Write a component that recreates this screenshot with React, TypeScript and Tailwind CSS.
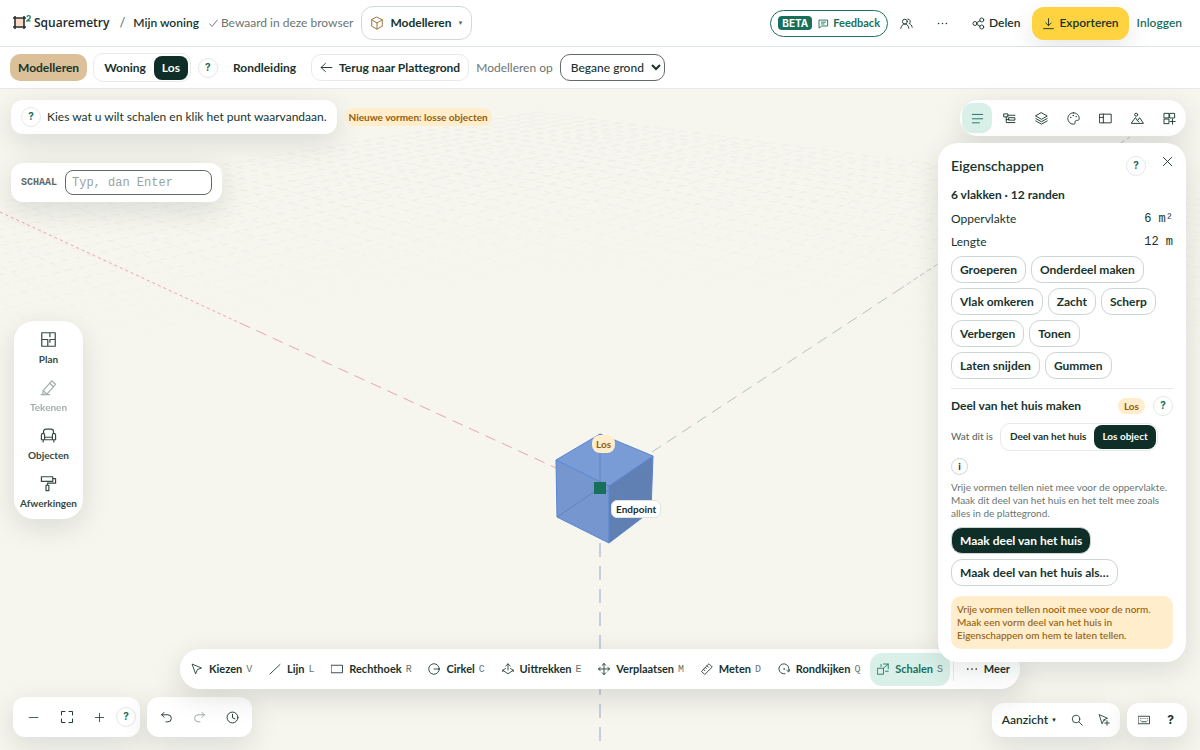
import React, { useState } from "react";
import { clsx } from "clsx";

interface IconProps {
  size?: number;
  className?: string;
  width?: number;
  children?: React.ReactNode;
}

function Icon({ size = 16, className, width = 1.7, children }: IconProps) {
  return (
    <svg
      width={size}
      height={size}
      viewBox="0 0 24 24"
      fill="none"
      stroke="currentColor"
      strokeWidth={width}
      strokeLinecap="round"
      strokeLinejoin="round"
      className={clsx("shrink-0", className)}
      aria-hidden="true"
    >
      {children}
    </svg>
  );
}

const icons = {
  cube: (
    <>
      <path d="M12 2 21 6.500v11L12 22.500 3 17.500V6.500z" />
      <path d="M3 6.500 12 12l9-5.500M12 12v10.500" />
    </>
  ),
  chat: (
    <>
      <path d="M3 4.500h18v13H8L3 21.500z" />
      <path d="M7.500 9h9M7.500 13h6" />
    </>
  ),
  users: (
    <>
      <circle cx="9" cy="8.500" r="4.500" />
      <path d="M1.500 21c.8-5 3.500-8 7.500-8s6.700 3 7.500 8" />
      <path d="M14.500 3.800a4.500 4.500 0 0 1 2.500 8.200c3 1 5 3.500 5.500 7" />
    </>
  ),
  dots: (
    <g fill="currentColor" stroke="none">
      <circle cx="3.500" cy="12" r="1.700" />
      <circle cx="12" cy="12" r="1.700" />
      <circle cx="20.500" cy="12" r="1.700" />
    </g>
  ),
  share: (
    <>
      <circle cx="5.500" cy="12" r="3.700" />
      <circle cx="18" cy="5.500" r="3.700" />
      <circle cx="18" cy="18.500" r="3.700" />
      <path d="m8.800 10.400 5.900-3.300M8.800 13.600l5.900 3.300" />
    </>
  ),
  download: <path d="M12 3v13M7 11l5 5 5-5M3 21.500h18" />,
  arrowLeft: <path d="M22 12H2M10 4.500 2 12l8 7.500" />,
  check: <path d="m2 13 6 7L22 3" />,
  lines: <path d="M2.500 4.500h19M2.500 12.500h19M2.500 20h13" />,
  tree: (
    <path d="M2 3.500h7v5.500H2zM6 9v10.500h5M6 14h5M9 6h13M11 10.500h11v4.500H11zM11 19.500h11" />
  ),
  layers: (
    <>
      <path d="M12 1.500 22.500 7.500 12 13.500 1.500 7.500z" />
      <path d="m1.500 12 10.500 6 10.500-6" />
      <path d="m1.500 16.500 10.500 6 10.500-6" />
    </>
  ),
  palette: (
    <>
      <path d="M12 1.500C6 1.500 1.500 6.200 1.500 12S6 22.500 12 22.500c2.200 0 3.300-1.300 2.900-3.300-.4-2.200.8-3.700 3-3.700h1.600c2 0 3-1.300 3-3.500 0-6-4.500-10.500-10.500-10.500z" />
      <g fill="currentColor" stroke="none">
        <circle cx="7" cy="10" r="1.300" />
        <circle cx="11.500" cy="6.500" r="1.300" />
        <circle cx="17" cy="8.500" r="1.300" />
      </g>
    </>
  ),
  sidebar: <path d="M1.500 4h21v16h-21zM8 4v16M1.500 10H8" />,
  scenery: (
    <>
      <path d="M1 21h22l-7-10.500-4 5.500-3.500-5z" />
      <path d="m12 16 2.500 2.500" />
      <circle cx="9.500" cy="5" r="2.800" />
    </>
  ),
  gridAdd: (
    <path d="M2.500 2.500h8.500V11H2.500zM13 2.500h8.500V11H13zM2.500 13H11v8.500H2.500zM13 17.500h9.500M17.500 13v9.500" />
  ),
  close: <path d="m3 3 18 18M21 3 3 21" />,
  plan: <path d="M2.500 2.500h19v19h-19zM2.500 12H11v9.500M14 2.500V8M14 12h7.500M14 12v4" />,
  pencil: (
    <>
      <path d="M1.500 22h12M4.500 16.500 16.500 2.500l5.500 5-12 13.500-6 1z" />
      <path d="m13.500 6 5.500 5M4.500 16.500l5.500 4.500" />
    </>
  ),
  sofa: (
    <>
      <path d="M5 9V6C5 4 6.500 3 8.500 3h7c2 0 3.500 1 3.500 3v3" />
      <path d="M6.500 14.500V11.500C6.500 10 5.600 9 4.200 9S2 10 2 11.500V18h20v-6.500C22 10 21 9 19.700 9s-2.200 1-2.200 2.500v3zM6.500 14.500V18M17.500 14.500V18M4.500 18v3M19.500 18v3" />
    </>
  ),
  roller: (
    <path d="M2 2.500h16v6.500H2zM18 5h4v6.500H10.500v3M8.500 14.500h4V22h-4z" />
  ),
  cursor: <path d="m3 2.500 18 7.500-8 3-3.500 8z" />,
  line: <path d="M2 22 22 3" />,
  rect: <path d="M1 4.500h22v15H1z" />,
  circle: (
    <>
      <circle cx="12" cy="12" r="10.500" />
      <path d="M12 12h10.500" />
    </>
  ),
  extrude: (
    <>
      <path d="M12 14V2M7.500 6 12 1.500 16.500 6" />
      <path d="M7 11 1.500 14.500 12 21.500l10.500-7L17 11" />
      <path d="M1.500 14.500v2.500M22.500 14.500v2.500" />
    </>
  ),
  move: (
    <path d="M12 1v22M1 12h22M8.500 4.500 12 1l3.500 3.500M8.500 19.500 12 23l3.500-3.500M4.500 8.500 1 12l3.500 3.500M19.500 8.500 23 12l-3.500 3.500" />
  ),
  ruler: (
    <path d="M1.500 16 16 1.500l6.500 6.500L8 22.500zM12 5.500l3 3M8.500 9l2 2M5 12.500l3 3" />
  ),
  orbit: (
    <>
      <path d="M14 21.500A10 10 0 1 1 21.500 14.500" />
      <path d="m17.500 14.500 4 3.500 2-5" />
      <circle cx="12" cy="12" r=".5" />
    </>
  ),
  scale: (
    <path d="M1.500 10.500H13v12H1.500zM8 7V3M13 2h9.500v9.500M22.500 2 13 10.500M22.500 16.500H17" />
  ),
  minus: <path d="M2.500 12h19" />,
  plus: <path d="M3 12h18M12 3v18" />,
  fit: <path d="M2.500 8.500v-6h6M15.500 2.500h6v6M21.500 15.500v6h-6M8.500 21.500h-6v-6" />,
  undo: <path d="M7.500 2.500 3 7l4.500 4.500M3 7h11.500a6.500 6.500 0 0 1 0 13H11" />,
  redo: <path d="M16.500 2.500 21 7l-4.500 4.500M21 7H9.500a6.500 6.500 0 0 0 0 13H13" />,
  clock: (
    <>
      <circle cx="12" cy="12" r="10" />
      <path d="M12 6v6.500l4.500 2" />
    </>
  ),
  search: (
    <>
      <circle cx="10" cy="10" r="7.500" />
      <path d="m15.500 15.500 7 7" />
    </>
  ),
  cursorAdd: (
    <path d="m3 1.500 16 7-7 3-3.500 7.500zM18 13.500v9M13.500 18h9M12 11.500l2 2" />
  ),
  keyboard: (
    <path d="M1 4.500h22v15H1zM5.500 9h.1M10 9h.1M14 9h.1M18.500 9h.1M5.500 12.500h.1M18.500 12.500h.1M7.500 15.500h9" />
  ),
};

type IconName = keyof typeof icons;

const panelTabs: { icon: IconName; label: string }[] = [
  { icon: "lines", label: "Eigenschappen" },
  { icon: "tree", label: "Structuur" },
  { icon: "layers", label: "Lagen" },
  { icon: "palette", label: "Materialen" },
  { icon: "sidebar", label: "Bladen" },
  { icon: "scenery", label: "Omgeving" },
  { icon: "gridAdd", label: "Onderdelen" },
];

const sideItems: { icon: IconName; label: string; disabled?: boolean }[] = [
  { icon: "plan", label: "Plan" },
  { icon: "pencil", label: "Tekenen", disabled: true },
  { icon: "sofa", label: "Objecten" },
  { icon: "roller", label: "Afwerkingen" },
];

const tools: { icon: IconName; label: string; shortcut: string }[] = [
  { icon: "cursor", label: "Kiezen", shortcut: "V" },
  { icon: "line", label: "Lijn", shortcut: "L" },
  { icon: "rect", label: "Rechthoek", shortcut: "R" },
  { icon: "circle", label: "Cirkel", shortcut: "C" },
  { icon: "extrude", label: "Uittrekken", shortcut: "E" },
  { icon: "move", label: "Verplaatsen", shortcut: "M" },
  { icon: "ruler", label: "Meten", shortcut: "D" },
  { icon: "orbit", label: "Rondkijken", shortcut: "Q" },
  { icon: "scale", label: "Schalen", shortcut: "S" },
];

const actionRows = [
  ["Groeperen", "Onderdeel maken"],
  ["Vlak omkeren", "Zacht", "Scherp"],
  ["Verbergen", "Tonen"],
  ["Laten snijden", "Gummen"],
];

const G = -0.043;
const H = -0.0516;
const EXTENT = 28;

// Ground plane to screen; the origin is the back corner of the cube
function project(a: number, b: number) {
  const w = 1 + G * a + H * b;
  const x = (600 - 536 * G * a + 1390 * H * b) / w;
  const y = (488 - 30 * (G * a + H * b)) / w;
  return `${x.toFixed(1)} ${y.toFixed(1)}`;
}

function gridLines() {
  const lines: string[] = [];
  for (let i = -EXTENT; i <= EXTENT; i += 1) {
    // stop before the line passes behind the camera
    const endB = Math.min(EXTENT, (0.8 + G * i) / -H);
    const endA = Math.min(EXTENT, (0.8 + H * i) / -G);
    if (endB > -EXTENT) lines.push(`M${project(i, -EXTENT)}L${project(i, endB)}`);
    if (endA > -EXTENT) lines.push(`M${project(-EXTENT, i)}L${project(endA, i)}`);
  }
  return lines.join("");
}

function Scene() {
  return (
    <svg
      className="absolute inset-0 h-full w-full"
      viewBox="0 89 1200 661"
      preserveAspectRatio="xMidYMid slice"
      fill="none"
      aria-hidden="true"
    >
      <defs>
        <radialGradient id="fade" gradientUnits="userSpaceOnUse" cx="0" cy="0" r="1" gradientTransform="translate(560 420) scale(800 310)">
          <stop offset="0.4" stopColor="#fff" stopOpacity="0" />
          <stop offset="0.75" stopColor="#fff" stopOpacity="0.6" />
          <stop offset="1" stopColor="#fff" stopOpacity="0.5" />
        </radialGradient>
        <linearGradient id="top" gradientUnits="userSpaceOnUse" x1="0" y1="260" x2="0" y2="380">
          <stop offset="0" stopColor="#f6f5ee" stopOpacity="0" />
          <stop offset="1" stopColor="#f6f5ee" />
        </linearGradient>
        <mask id="gridMask" maskUnits="userSpaceOnUse" x="0" y="89" width="1200" height="661">
          <rect x="0" y="89" width="1200" height="661" fill="url(#fade)" />
        </mask>
      </defs>
      <g mask="url(#gridMask)">
        <path d={gridLines()} stroke="#d0d3cd" strokeWidth="0.6" strokeOpacity="0.55" strokeDasharray="7 6" />
      </g>
      <rect x="0" y="260" width="1200" height="490" fill="url(#top)" />
      <path d="M0 212 240 323" stroke="#eba6a6" strokeDasharray="3 3" />
      <path d="M240 323 556 468" stroke="#eba6a6" strokeDasharray="11 7" />
      <path d="M652 452 900 289" stroke="#b3c6b8" strokeDasharray="11 7" />
      <path d="M900 289 1130 137" stroke="#bcc6bd" strokeDasharray="5 3" />
      <path d="M600 543v210" stroke="#b9c0dc" strokeWidth="1.500" strokeDasharray="14 9" />

      <path d="M600 434 653 456 609 486 556 460z" fill="#7a9cd6" />
      <path d="M556 460 609 486V543L557 517z" fill="#7596cf" />
      <path d="M653 456 609 486V543L651 511z" fill="#6080b3" />
      <path d="M600 434v54M557 517l43-29 51 23" stroke="#6384c0" />
      <path d="M600 434 653 456 651 511 609 543 557 517 556 460zM556 460 609 486 653 456M609 486v57" stroke="#5784d3" />
      <path d="M594 482h12v12h-12z" fill="#18705b" />
    </svg>
  );
}

function HelpButton({ className }: { className?: string }) {
  return (
    <button
      aria-label="Hulp"
      className={clsx(
        "flex size-5 shrink-0 items-center justify-center rounded-full border border-[#e3e9e6] bg-white font-['Inter',sans-serif] text-[10px] font-bold text-[#1b705b]",
        className,
      )}
    >
      ?
    </button>
  );
}

function IconButton({ icon, label, className, size = 16 }: { icon: IconName; label: string; className?: string; size?: number }) {
  return (
    <button aria-label={label} className={clsx("flex items-center justify-center", className)}>
      <Icon size={size}>{icons[icon]}</Icon>
    </button>
  );
}

function Header() {
  return (
    <header className="flex h-[47px] shrink-0 items-center border-b border-[#dfe7e4] bg-white pl-3 pr-[18px]">
      <a href="#" className="flex items-center gap-0.5 text-[#232b2b]">
        <svg width="20" height="18" viewBox="0 0 20 18" fill="none" aria-hidden="true">
          <path d="M3 4h9v9H3z" fill="#fbd9c5" />
          <path d="M3 2v13M12 2v13M1 4h13M1 13h13" stroke="#28302f" strokeWidth="1.600" />
          <path d="M15 3c.2-2 3.600-1.800 3.300.3-.2 1.200-1.800 2-3.300 3.500h3.500" stroke="#1b8068" strokeWidth="1.300" />
        </svg>
        <span className="font-['Open_Sans',sans-serif] text-xs font-semibold">Squaremetry</span>
      </a>
      <span className="ml-2.5 text-[13px] text-[#56635f]">/</span>
      <a href="#" className="ml-2 text-xs font-semibold">Mijn woning</a>
      <span className="ml-2.5 flex items-center gap-[3px] text-xs text-[#6a7572]">
        <Icon size={9} width={2.5}>{icons.check}</Icon>
        Bewaard in deze browser
      </span>
      <button className="ml-2 flex h-[34px] items-center gap-1.5 rounded-xl border border-[#cfdbd7] px-2 text-xs font-bold">
        <span className="text-[#9a7440]">
          <Icon size={14}>{icons.cube}</Icon>
        </span>
        Modelleren
        <span className="text-[6px] text-[#56635f]">▼</span>
      </button>

      <div className="ml-auto flex items-center">
        <button className="flex h-[27px] items-center gap-1 rounded-full border border-[#1b705b] px-[7px] text-[11px] font-bold text-[#1b705b]">
          <span className="mr-0.5 rounded bg-[#18705b] px-1 font-['Inter',sans-serif] text-[10px] leading-[14px] text-white">BETA</span>
          <Icon size={11} width={2}>{icons.chat}</Icon>
          Feedback
        </button>
        <IconButton icon="users" label="Samenwerken" size={13} className="ml-1 size-7" />
        <IconButton icon="dots" label="Meer opties" size={11} className="ml-2 size-7" />
        <button className="ml-4 flex items-center gap-1 text-xs font-semibold">
          <Icon size={13}>{icons.share}</Icon>
          Delen
        </button>
        <button className="ml-3 flex h-[33px] items-center gap-1 rounded-xl bg-[#ffd23f] px-2.5 text-xs font-semibold shadow-[0_10px_24px_rgba(20,40,30,0.1)]">
          <Icon size={13}>{icons.download}</Icon>
          Exporteren
        </button>
        <a href="#" className="ml-2 text-xs font-semibold text-[#1b705b]">Inloggen</a>
      </div>
    </header>
  );
}

function ModeBar() {
  const [mode, setMode] = useState("Los");

  return (
    <nav className="flex h-[42px] shrink-0 items-center border-b border-[#e7eae6] bg-white px-2.5 text-xs font-bold">
      <button className="h-[27px] rounded-[10px] bg-[#dbc09a] px-2">Modelleren</button>
      <div className="ml-1.5 flex h-[29px] items-center rounded-[10px] border border-[#e5ebe8] p-0.5">
        {["Woning", "Los"].map((item) => (
          <button
            key={item}
            onClick={() => setMode(item)}
            className={clsx(
              "h-6 rounded-lg px-2",
              mode === item && "bg-[#0e2e27] text-white",
            )}
          >
            {item}
          </button>
        ))}
      </div>
      <HelpButton className="ml-[7px]" />
      <button className="ml-[15px]">Rondleiding</button>
      <button className="ml-[15px] flex h-[27px] items-center gap-1.5 rounded-[10px] border border-[#e5ebe8] px-2">
        <Icon size={13}>{icons.arrowLeft}</Icon>
        Terug naar Plattegrond
      </button>
      <label htmlFor="floor" className="ml-[7px] font-normal text-[#6a7572]">Modelleren op</label>
      <select id="floor" className="ml-[7px] h-[27px] w-[105px] rounded-[10px] border border-[#626b68] bg-white pl-1.5 font-medium">
        <option>Begane grond</option>
      </select>
    </nav>
  );
}

function PropertiesPanel() {
  const [kind, setKind] = useState("Los object");

  return (
    <section className="absolute right-[14px] top-[54px] z-20 w-[248px] rounded-[20px] bg-white px-[13px] pb-[13px] text-xs shadow-[0_8px_28px_rgba(20,40,30,0.12)]">
      <div className="flex h-11 items-center pt-0.5">
        <h2 className="mr-auto text-sm font-semibold">Eigenschappen</h2>
        <HelpButton className="mr-[15px]" />
        <button aria-label="Sluiten" className="mb-2.5 flex size-3 items-center justify-center">
          <Icon size={11} width={2}>{icons.close}</Icon>
        </button>
      </div>
      <p className="mb-1 text-xs leading-4 font-bold">6 vlakken · 12 randen</p>
      <dl className="flex h-[23px] items-center justify-between">
        <dt>Oppervlakte</dt>
        <dd className="font-['Liberation_Mono',monospace]">6 m²</dd>
      </dl>
      <dl className="flex h-[23px] items-center justify-between">
        <dt>Lengte</dt>
        <dd className="font-['Liberation_Mono',monospace]">12 m</dd>
      </dl>
      <div className="mt-[3px] flex flex-col gap-[5px]">
        {actionRows.map((row) => (
          <div key={row[0]} className="flex gap-[5px]">
            {row.map((label) => (
              <button key={label} className="h-[27px] rounded-[11px] border border-[#ccd6d2] px-2 font-bold">
                {label}
              </button>
            ))}
          </div>
        ))}
      </div>

      <div className="mt-[9px] flex items-center border-t border-[#e3e8e5] pt-[7px]">
        <h3 className="mr-auto font-bold">Deel van het huis maken</h3>
        <span className="mr-2 rounded-full bg-[#ffedcc] px-1.5 text-[10px] leading-4 font-bold text-[#935e0b]">Los</span>
        <HelpButton />
      </div>
      <div className="mt-[7px] flex items-center text-[10px]">
        <span className="mr-[7px] font-medium text-[#5c6966]">Wat dit is</span>
        <div className="flex h-7 items-center rounded-[10px] border border-[#e5ebe8] p-px font-bold">
          {["Deel van het huis", "Los object"].map((item) => (
            <button
              key={item}
              onClick={() => setKind(item)}
              className={clsx("h-6 rounded-lg px-2", kind === item && "bg-[#0e2e27] text-white")}
            >
              {item}
            </button>
          ))}
        </div>
      </div>
      <button aria-label="Meer informatie" className="mt-[7px] flex size-[17px] items-center justify-center rounded-full border border-[#ccd6d2] text-[10px] font-bold">
        i
      </button>
      <p className="mt-[6px] text-[10px] leading-[13px] text-[#6a7572]">
        Vrije vormen tellen niet mee voor de oppervlakte. Maak dit deel van het huis en het telt mee zoals alles in de plattegrond.
      </p>
      <div className="mt-[7px] flex flex-col items-start gap-[5px] font-bold">
        <button className="h-[27px] rounded-[11px] border border-[#ccd6d2] bg-[#0e2e27] px-2 text-white">Maak deel van het huis</button>
        <button className="h-[27px] rounded-[11px] border border-[#ccd6d2] px-2">Maak deel van het huis als…</button>
      </div>
      <p className="mt-2.5 rounded-[10px] bg-[#ffedcc] px-1.5 py-[7px] text-[10px] leading-[13px] font-medium text-[#935e0b]">
        Vrije vormen tellen nooit mee voor de norm. Maak een vorm deel van het huis in Eigenschappen om hem te laten tellen.
      </p>
    </section>
  );
}

function ToolBar() {
  const [active, setActive] = useState("Schalen");

  return (
    <div className="absolute bottom-[61px] left-1/2 z-10 flex h-10 w-[840px] -translate-x-1/2 items-center justify-between rounded-[20px] bg-white pl-1 pr-2.5 text-[11px] font-bold shadow-[0_8px_28px_rgba(20,40,30,0.14)]">
      {tools.map((tool) => (
        <button
          key={tool.label}
          onClick={() => setActive(tool.label)}
          className={clsx(
            "flex h-[33px] items-center rounded-xl px-[7px]",
            active === tool.label && "bg-[#d9f0e9] text-[#1b705b]",
          )}
        >
          <Icon size={12}>{icons[tool.icon]}</Icon>
          <span className="ml-1.5">{tool.label}</span>
          <kbd className="ml-1 pt-0.5 font-['Liberation_Mono',monospace] text-[10px] font-normal text-[#6a7572]">{tool.shortcut}</kbd>
        </button>
      ))}
      <button className="flex h-6 items-center gap-1.5 border-l border-[#e3e8e5] pl-3">
        <Icon size={12}>{icons.dots}</Icon>
        Meer
      </button>
    </div>
  );
}

export default function App() {
  const [tab, setTab] = useState("Eigenschappen");

  return (
    <div className="flex h-screen flex-col overflow-hidden bg-[#f6f5ee] font-['Lato',sans-serif] text-xs text-[#17342d]">
      <Header />
      <ModeBar />
      <main className="relative min-h-0 flex-1">
        <Scene />

        <div className="absolute left-1/2 top-[346px] ml-[-8px] rounded-lg bg-[#ffedcc] px-1 text-[10px] leading-[18px] font-bold text-[#935e0b]">Los</div>
        <div className="absolute left-1/2 top-[411px] ml-[11px] rounded-md border border-[#dfe3e0] bg-white px-1 text-[10px] leading-4 font-bold text-[#232b2b]">Endpoint</div>

        <div className="absolute left-[11px] top-[11px] flex items-center gap-2">
          <div className="flex h-[34px] items-center gap-1.5 rounded-xl bg-white px-2.5 shadow-[0_8px_28px_rgba(20,40,30,0.12)]">
            <HelpButton />
            <p>Kies wat u wilt schalen en klik het punt waarvandaan.</p>
          </div>
          <span className="rounded-full bg-[#ffedcc] px-1 text-[10px] leading-[18px] font-bold text-[#935e0b]">Nieuwe vormen: losse objecten</span>
        </div>

        <div className="absolute left-[11px] top-[74px] flex h-[39px] items-center gap-2 rounded-xl bg-white px-2.5 shadow-[0_8px_28px_rgba(20,40,30,0.12)]">
          <label htmlFor="scale" className="font-['Liberation_Mono',monospace] text-[10px] font-bold text-[#5c6966]">SCHAAL</label>
          <input
            id="scale"
            placeholder="Typ, dan Enter"
            className="h-[25px] w-[147px] rounded-lg border border-[#626b68] px-1.5 font-['Liberation_Mono',monospace] text-xs placeholder:text-[#9aa3a0]"
          />
        </div>

        <div className="absolute left-[14px] top-[232px] flex w-[69px] flex-col rounded-[20px] bg-white pb-1.5 shadow-[0_8px_28px_rgba(20,40,30,0.12)]">
          {sideItems.map((item) => (
            <button
              key={item.label}
              disabled={item.disabled}
              className={clsx("flex h-12 flex-col items-center justify-end gap-[3px] pb-0.5 text-[10px] leading-4 font-bold text-[#344b45]", item.disabled && "opacity-45")}
            >
              <Icon size={17} width={1.7}>{icons[item.icon]}</Icon>
              {item.label}
            </button>
          ))}
        </div>

        <div className="absolute right-[14px] top-[11px] z-20 flex h-9 items-center gap-0.5 rounded-full bg-white px-0.5 shadow-[0_8px_28px_rgba(20,40,30,0.12)]">
          {panelTabs.map((item) => (
            <button
              key={item.label}
              aria-label={item.label}
              onClick={() => setTab(item.label)}
              className={clsx(
                "flex size-[30px] items-center justify-center rounded-[10px]",
                tab === item.label && "bg-[#d9f0e9] text-[#1b705b]",
              )}
            >
              <Icon size={13}>{icons[item.icon]}</Icon>
            </button>
          ))}
        </div>
        <PropertiesPanel />

        <ToolBar />

        <div className="absolute bottom-[13px] left-[13px] flex gap-[7px]">
          <div className="flex h-10 items-center rounded-xl bg-white px-1 shadow-[0_8px_28px_rgba(20,40,30,0.12)]">
            <IconButton icon="minus" label="Uitzoomen" size={11} className="size-[33px]" />
            <IconButton icon="fit" label="Passend maken" size={14} className="size-[33px]" />
            <IconButton icon="plus" label="Inzoomen" size={11} className="size-[33px]" />
            <HelpButton />
          </div>
          <div className="flex h-10 items-center rounded-xl bg-white px-[3px] shadow-[0_8px_28px_rgba(20,40,30,0.12)]">
            <IconButton icon="undo" label="Ongedaan maken" size={13} className="size-[33px]" />
            <IconButton icon="redo" label="Opnieuw" size={13} className="size-[33px] opacity-45" />
            <IconButton icon="clock" label="Geschiedenis" size={13} className="size-[33px]" />
          </div>
        </div>

        <div className="absolute bottom-[13px] right-[13px] flex gap-[7px]">
          <div className="flex h-[34px] items-center rounded-xl bg-white pl-2.5 pr-[3px] shadow-[0_8px_28px_rgba(20,40,30,0.12)]">
            <button className="mr-1.5 flex items-center gap-[3px] font-semibold">
              Aanzicht
              <span className="text-[6px]">▼</span>
            </button>
            <IconButton icon="search" label="Zoeken" size={12} className="size-[27px]" />
            <IconButton icon="cursorAdd" label="Selectie uitbreiden" size={12} className="size-[27px]" />
          </div>
          <div className="flex h-[34px] items-center rounded-xl bg-white px-[3px] shadow-[0_8px_28px_rgba(20,40,30,0.12)]">
            <IconButton icon="keyboard" label="Sneltoetsen" size={12} className="size-[27px]" />
            <button aria-label="Hulp" className="size-[27px] font-['Inter',sans-serif] font-bold">?</button>
          </div>
        </div>
      </main>
    </div>
  );
}
